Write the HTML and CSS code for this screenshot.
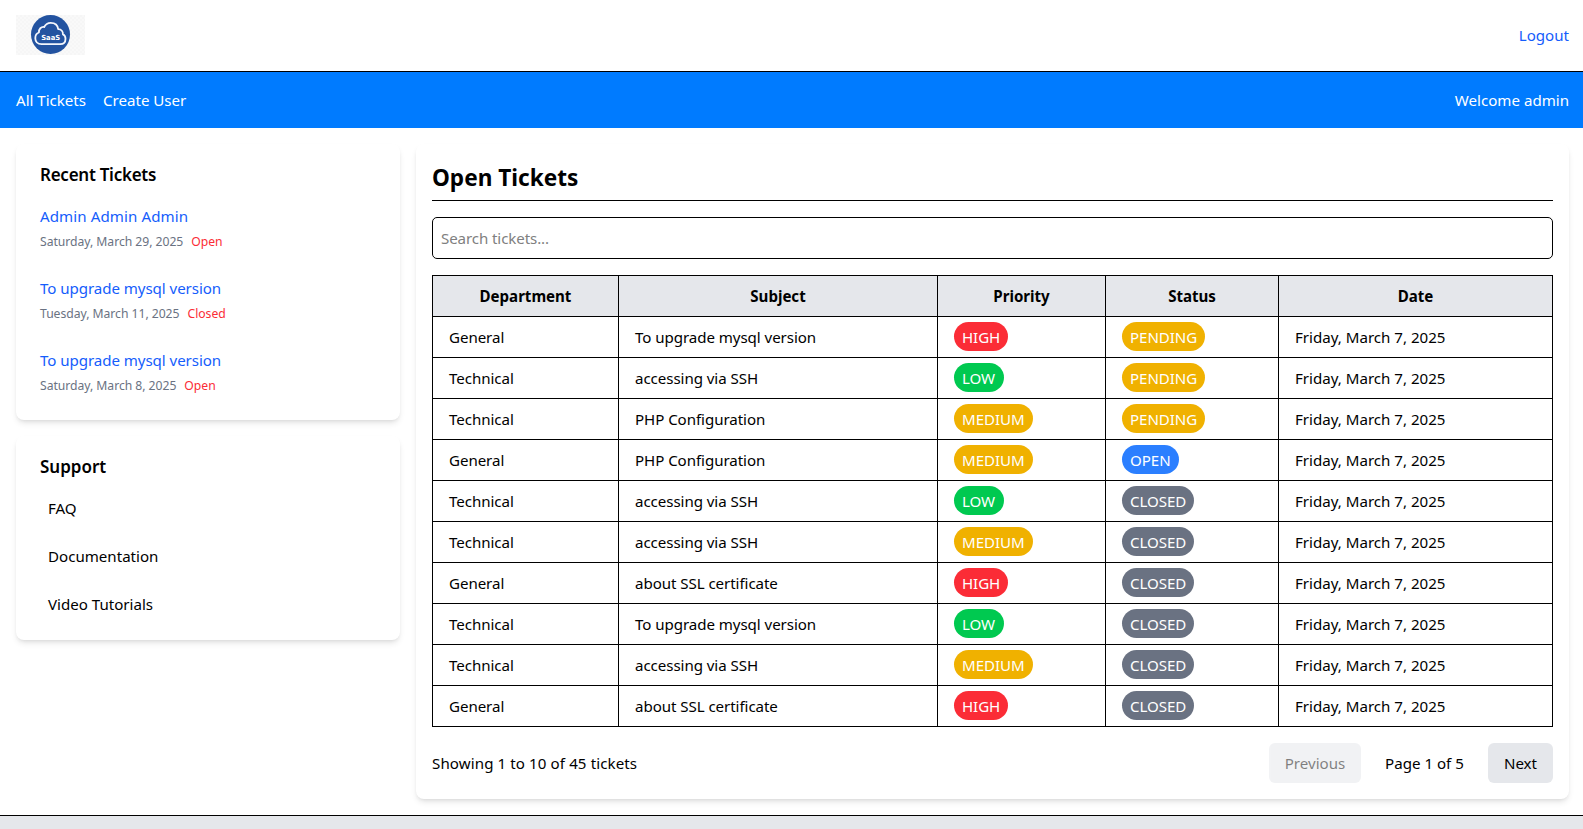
FILE: index.html
```html
<!DOCTYPE html>
<html lang="en">
<head>
<meta charset="utf-8">
<title>Open Tickets</title>
<link rel="stylesheet" href="styles.css">
</head>
<body>
<header class="header">
  <svg class="logo" width="69" height="40" viewBox="0 0 69 40" role="img" aria-label="SaaS">
    <defs><pattern id="check" width="4" height="4" patternUnits="userSpaceOnUse"><rect width="4" height="4" fill="#f9f9f9"/><path d="M0 0h2v2H0zM2 2h2v2H2z" fill="#f6f6f6"/></pattern></defs>
    <rect width="69" height="40" fill="url(#check)"/>
    <circle cx="34.5" cy="19.5" r="19.5" fill="#2353a0"/>
    <path d="M25.500 29.200c-4 0-6.200-2.800-6.200-6 0-2.900 1.500-5 3.600-5.700-.1-3.600 2.200-5.900 5.300-5.500 1.400-2.900 3.500-4.200 6.500-4.200 4.200 0 7.100 2.600 7.500 6.400 3.200.1 5 2.300 4.700 5.200 1.700.7 2.600 2.200 2.600 4.300 0 3.300-2.100 5.500-5.300 5.500z" fill="none" stroke="#f4f6fb" stroke-width="1.800" stroke-linejoin="round"/>
    <text class="logo-text" x="34.700" y="24.900" text-anchor="middle" textLength="19" lengthAdjust="spacingAndGlyphs">SaaS</text>
  </svg>
  <a class="logout">Logout</a>
</header>
<nav class="nav">
  <div class="nav-links"><a>All Tickets</a><a>Create User</a></div>
  <span class="welcome">Welcome admin</span>
</nav>
<main class="content">
  <aside class="sidebar">
    <section class="card side-card">
      <h3 class="recent-title">Recent Tickets</h3>
      <ul class="recent">
        <li><a class="wide">Admin Admin Admin</a><p><span>Saturday, March 29, 2025</span><em>Open</em></p></li>
        <li><a>To upgrade mysql version</a><p><span>Tuesday, March 11, 2025</span><em>Closed</em></p></li>
        <li><a>To upgrade mysql version</a><p><span>Saturday, March 8, 2025</span><em>Open</em></p></li>
      </ul>
    </section>
    <section class="card side-card">
      <h3>Support</h3>
      <ul class="support"><li>FAQ</li><li>Documentation</li><li>Video Tutorials</li></ul>
    </section>
  </aside>
  <section class="card tickets">
    <h2>Open Tickets</h2>
    <input class="search" type="text" placeholder="Search tickets...">
    <table class="table">
      <colgroup><col class="c-dept"><col class="c-subject"><col class="c-priority"><col class="c-status"><col class="c-date"></colgroup>
      <thead><tr><th>Department</th><th>Subject</th><th>Priority</th><th>Status</th><th>Date</th></tr></thead>
      <tbody>
        <tr><td>General</td><td>To upgrade mysql version</td><td><span class="badge high">HIGH</span></td><td><span class="badge pending">PENDING</span></td><td>Friday, March 7, 2025</td></tr>
        <tr><td>Technical</td><td>accessing via SSH</td><td><span class="badge low">LOW</span></td><td><span class="badge pending">PENDING</span></td><td>Friday, March 7, 2025</td></tr>
        <tr><td>Technical</td><td>PHP Configuration</td><td><span class="badge medium">MEDIUM</span></td><td><span class="badge pending">PENDING</span></td><td>Friday, March 7, 2025</td></tr>
        <tr><td>General</td><td>PHP Configuration</td><td><span class="badge medium">MEDIUM</span></td><td><span class="badge open">OPEN</span></td><td>Friday, March 7, 2025</td></tr>
        <tr><td>Technical</td><td>accessing via SSH</td><td><span class="badge low">LOW</span></td><td><span class="badge closed">CLOSED</span></td><td>Friday, March 7, 2025</td></tr>
        <tr><td>Technical</td><td>accessing via SSH</td><td><span class="badge medium">MEDIUM</span></td><td><span class="badge closed">CLOSED</span></td><td>Friday, March 7, 2025</td></tr>
        <tr><td>General</td><td>about SSL certificate</td><td><span class="badge high">HIGH</span></td><td><span class="badge closed">CLOSED</span></td><td>Friday, March 7, 2025</td></tr>
        <tr><td>Technical</td><td>To upgrade mysql version</td><td><span class="badge low">LOW</span></td><td><span class="badge closed">CLOSED</span></td><td>Friday, March 7, 2025</td></tr>
        <tr><td>Technical</td><td>accessing via SSH</td><td><span class="badge medium">MEDIUM</span></td><td><span class="badge closed">CLOSED</span></td><td>Friday, March 7, 2025</td></tr>
        <tr><td>General</td><td>about SSL certificate</td><td><span class="badge high">HIGH</span></td><td><span class="badge closed">CLOSED</span></td><td>Friday, March 7, 2025</td></tr>
      </tbody>
    </table>
    <div class="pagination">
      <span class="summary">Showing 1 to 10 of 45 tickets</span>
      <div class="pager"><button class="prev" disabled>Previous</button><span class="page">Page 1 of 5</span><button class="next">Next</button></div>
    </div>
  </section>
</main>
<footer class="footer"></footer>
</body>
</html>
```
FILE: styles.css
```css
* { box-sizing: border-box; margin: 0; padding: 0; }
body {
  height: 829px;
  overflow: hidden;
  display: flex;
  flex-direction: column;
  background: #fff;
  color: #000;
  font: 15.1px/24px "Segoe UI", "Noto Sans", sans-serif;
}
ul { list-style: none; }
.header {
  display: flex;
  justify-content: space-between;
  align-items: center;
  height: 72px;
  padding: 0 14px 1px 16px;
  border-bottom: 1px solid #000;
}
.logo { display: block; }
.logo-text { font: bold 7px "DejaVu Sans", sans-serif; fill: #fff; }
.logout { color: #155dfc; }
.nav {
  display: flex;
  justify-content: space-between;
  align-items: center;
  height: 56px;
  padding: 0 14px 0 16px;
  background: #007bff;
  color: #fff;
}
.nav-links { display: flex; gap: 17px; letter-spacing: -.01px; }
.content { display: flex; align-items: flex-start; gap: 16px; padding: 16px 14px 16px 16px; }
.sidebar { display: flex; flex-direction: column; gap: 16px; width: 384px; }
.card {
  background: #fff;
  border-radius: 8px;
  box-shadow: 0 4px 6px -1px rgba(0, 0, 0, .1), 0 2px 4px -2px rgba(0, 0, 0, .1);
}
.side-card { padding: 16px 24px; }
.side-card h3 { height: 28px; font-size: 17px; font-weight: 600; line-height: 30px; }
.side-card .recent-title { letter-spacing: -.26px; }
.recent { display: grid; gap: 16px; margin-top: 16px; }
.recent li { height: 56px; }
.recent a { display: block; color: #155dfc; letter-spacing: -.06px; }
.recent .wide { letter-spacing: .09px; }
.recent p { display: flex; gap: 8px; padding-top: 2px; font-size: 12.2px; letter-spacing: -.04px; color: #6a7282; }
.recent em { font-style: normal; color: #fb2c36; }
.support { margin-top: 8px; }
.support li { height: 40px; padding: 8px; }
.support li + li { margin-top: 8px; }
.tickets { flex: 1; padding: 16px; }
.tickets h2 { height: 41px; border-bottom: 1px solid #000; font-size: 22.6px; line-height: 35px; font-weight: 700; }
.search {
  display: block;
  width: 100%;
  height: 42px;
  margin: 16px 0;
  padding: 8px;
  border: 1px solid #000;
  border-radius: 5px;
  font: inherit;
  letter-spacing: -.1px;
}
.search::placeholder { color: #808080; }
.table {
  width: 100%;
  table-layout: fixed;
  border-collapse: separate;
  border-spacing: 0;
  border-top: 1px solid #000;
  border-left: 1px solid #000;
}
.c-dept { width: 186px; }
.c-subject { width: 319px; }
.c-priority { width: 168px; }
.c-status { width: 173px; }
.table th, .table td { height: 41px; border-right: 1px solid #000; border-bottom: 1px solid #000; vertical-align: middle; }
.table th { background: #e5e7eb; text-align: center; letter-spacing: -.02px; }
.table td { padding: 0 16px; text-align: left; letter-spacing: -.06px; }
.table td:last-child { letter-spacing: 0; }
.badge { display: block; height: 29px; margin-top: -1px; padding: 0 8px; border-radius: 15px; color: #fff; line-height: 30px; }
.high { width: 54px; background: #fb2c36; }
.low { width: 50px; background: #00c950; }
.medium { width: 79px; background: #f0b100; }
.pending { width: 83px; background: #f0b100; }
.open { width: 57px; background: #2b7fff; }
.closed { width: 72px; background: #6a7282; }
.pagination { display: flex; justify-content: space-between; align-items: center; margin-top: 16px; }
.summary { letter-spacing: .1px; }
.pager { display: flex; align-items: center; }
.pager button { height: 40px; border: 0; border-radius: 6px; background: #e5e7eb; color: #000; font: inherit; }
.pager .prev { width: 92px; opacity: .5; }
.pager .next { width: 65px; }
.page { width: 127px; text-align: center; white-space: nowrap; }
.footer { flex: 1; border-top: 1px solid #000; background: #e5e7eb; }
```
